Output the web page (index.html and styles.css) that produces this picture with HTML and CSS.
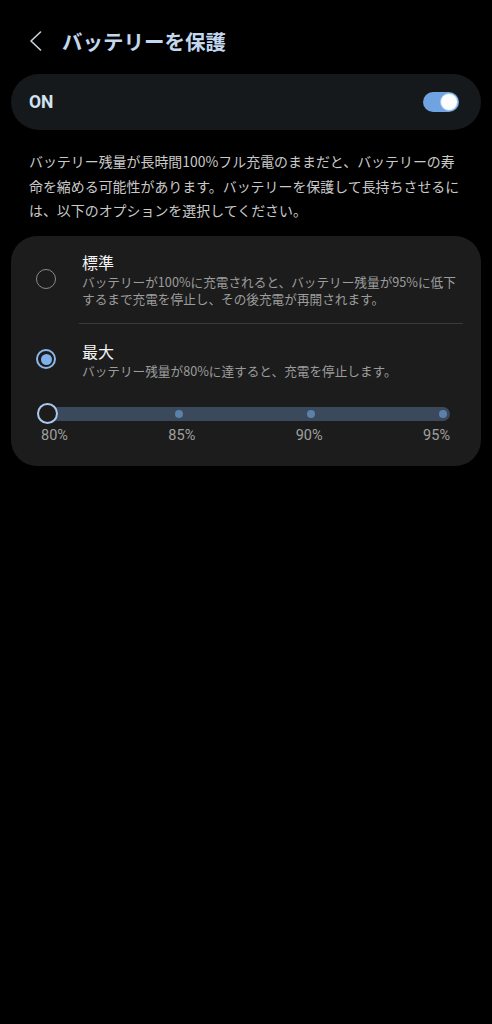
FILE: index.html
```html
<!DOCTYPE html>
<html lang="ja">
<head>
<meta charset="utf-8">
<link rel="stylesheet" href="styles.css">
</head>
<body>
<header class="header">
  <svg class="back" width="14" height="20" viewBox="0 0 14 20"><path d="M11.5 1 L2 10 L11.5 19" fill="none" stroke="#c9d5e2" stroke-width="1.6" stroke-linecap="round" stroke-linejoin="round"/></svg>
  <h1 class="title">バッテリーを保護</h1>
</header>

<div class="on-card">
  <span class="on-label">ON</span>
  <span class="toggle"><span class="thumb"></span></span>
</div>

<p class="desc">バッテリー残量が長時間100%フル充電のままだと、バッテリーの寿<br>命を縮める可能性があります。バッテリーを保護して長持ちさせるに<br>は、以下のオプションを選択してください。</p>

<div class="options">
  <div class="option">
    <span class="radio"></span>
    <div class="opt-text">
      <div class="opt-title">標準</div>
      <div class="opt-desc">バッテリーが100%に充電されると、バッテリー残量が95%に低下<br>するまで充電を停止し、その後充電が再開されます。</div>
    </div>
  </div>
  <div class="divider"></div>
  <div class="option option2">
    <span class="radio checked"></span>
    <div class="opt-text">
      <div class="opt-title">最大</div>
      <div class="opt-desc">バッテリー残量が80%に達すると、充電を停止します。</div>
    </div>
  </div>
  <div class="slider">
    <div class="track">
      <span class="stop"><span class="knob"></span></span>
      <span class="stop"><span class="dot"></span></span>
      <span class="stop"><span class="dot"></span></span>
      <span class="stop"><span class="dot"></span></span>
    </div>
    <div class="labels">
      <span>80%</span><span>85%</span><span>90%</span><span>95%</span>
    </div>
  </div>
</div>
</body>
</html>
```

FILE: styles.css
```css
* { box-sizing: border-box; }
html, body { margin: 0; padding: 0; background: #000; }
body {
  width: 492px;
  min-height: 1024px;
  font-family: "Noto Sans CJK JP", "Noto Sans", sans-serif;
  color: #e6e6e6;
}
.header {
  height: 74px;
  padding: 8px 0 0 29px;
  display: flex;
  align-items: center;
}
.back { display: block; margin-right: 19px; }
.title {
  margin: 0;
  font-size: 20.5px;
  font-weight: 700;
  color: #c3d8ee;
  line-height: 28px;
}
.on-card {
  margin: 0 11px;
  height: 56px;
  border-radius: 28px;
  background: #16191b;
  display: flex;
  align-items: center;
  justify-content: space-between;
  padding: 0 22px 0 18px;
}
.on-label {
  font-family: "Roboto", "Noto Sans", sans-serif;
  font-weight: 700;
  font-size: 17.5px;
  color: #d3e2f1;
}
.toggle {
  width: 36px;
  height: 20px;
  border-radius: 10px;
  background: #6fa3e2;
  display: flex;
  align-items: center;
  justify-content: flex-end;
  padding-right: 2px;
}
.thumb {
  width: 16px;
  height: 16px;
  border-radius: 50%;
  background: #fbfdff;
  box-shadow: 0 0 0 1px #a8c8ee;
}
.desc {
  margin: 19px 0 13px;
  padding: 0 0 0 29px;
  font-size: 13.95px;
  line-height: 24.5px;
  color: #c9c9c9;
  white-space: nowrap;
}
.options {
  margin: 0 11px;
  border-radius: 26px;
  background: #1c1c1c;
  padding: 15px 18px 20px 24px;
}
.option {
  display: flex;
  align-items: center;
}
.option2 { margin-top: 16px; }
.radio {
  flex: none;
  width: 20px;
  height: 20px;
  border-radius: 50%;
  border: 1.6px solid #8a8a8a;
  margin-right: 26px;
  margin-left: 1px;
  display: flex;
  align-items: center;
  justify-content: center;
}
.radio.checked {
  border: 2.2px solid #8cb7e8;
}
.radio.checked::after {
  content: "";
  width: 11px;
  height: 11px;
  border-radius: 50%;
  background: #7fb0ec;
}
.opt-title {
  font-size: 16px;
  line-height: 22px;
  color: #f4f4f4;
  font-weight: 400;
}
.opt-desc {
  font-size: 12.65px;
  line-height: 17px;
  color: #9c9c9c;
  white-space: nowrap;
}
.divider {
  height: 1px;
  background: #3a3a3a;
  margin: 16px 0 0 44px;
}
.slider {
  margin-top: 28px;
  padding-left: 2px;
}
.track {
  width: 413px;
  height: 14px;
  border-radius: 7px;
  background: #3a4a5c;
  display: flex;
  align-items: center;
  justify-content: space-between;
}
.track .stop:last-child { margin-right: -3.5px; }
.stop {
  width: 21px;
  height: 14px;
  display: flex;
  align-items: center;
  justify-content: center;
}
.knob {
  flex: none;
  width: 21px;
  height: 21px;
  border-radius: 50%;
  border: 2px solid #a9c9ee;
  background: #1e1c1b;
}
.dot {
  width: 8px;
  height: 8px;
  border-radius: 50%;
  background: #5b80aa;
}
.labels {
  margin-top: 5px;
  padding: 0 0 0 4px;
  width: 413px;
  display: flex;
  justify-content: space-between;
  font-family: "Roboto", "Noto Sans", sans-serif;
  font-size: 14.5px;
  line-height: 20px;
  color: #a0a0a0;
}
```
